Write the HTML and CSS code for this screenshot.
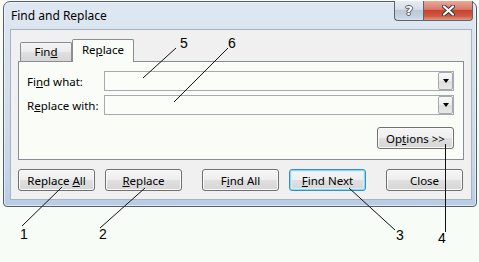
FILE: index.html
```html
<!DOCTYPE html>
<html>
<head>
<meta charset="utf-8">
<title>Find and Replace</title>
<link rel="stylesheet" href="styles.css">
</head>
<body>
<div class="window">
  <div class="titlebar">
    <span class="title">Find and Replace</span>
    <div class="caption">
      <div class="cbtn help"><span class="qmark">?</span></div>
      <div class="cbtn close">
        <svg width="13" height="11" viewBox="0 0 13 11">
          <path d="M2 1.5 L11 9.5 M11 1.5 L2 9.5" stroke="#3b3b3b" stroke-width="4.2" stroke-linecap="round"/>
          <path d="M2 1.5 L11 9.5 M11 1.5 L2 9.5" stroke="#ffffff" stroke-width="2.2" stroke-linecap="round"/>
        </svg>
      </div>
    </div>
  </div>
  <div class="client">
    <div class="tabs">
      <div class="tab">Fin<u>d</u></div>
      <div class="tab active">Re<u>p</u>lace</div>
    </div>
    <div class="panel">
      <div class="row">
        <span class="label">Fi<u>n</u>d what:</span>
        <div class="combo"><div class="drop"></div></div>
      </div>
      <div class="row">
        <span class="label">R<u>e</u>place with:</span>
        <div class="combo"><div class="drop"></div></div>
      </div>
      <div class="opts">
        <div class="btn"><span>Op<u>t</u>ions &gt;&gt;</span></div>
      </div>
    </div>
    <div class="actions">
      <div class="btn"><span>Replace <u>A</u>ll</span></div>
      <div class="btn near"><span><u>R</u>eplace</span></div>
      <div class="btn far"><span>F<u>i</u>nd All</span></div>
      <div class="btn near default"><span><u>F</u>ind Next</span></div>
      <div class="btn far"><span>Close</span></div>
    </div>
  </div>
</div>

<svg class="annot" width="479" height="262" viewBox="0 0 479 262">
  <g stroke="#111" stroke-width="1" fill="none">
    <line x1="22" y1="226" x2="62" y2="187"/>
    <line x1="100" y1="228" x2="145" y2="188"/>
    <line x1="349" y1="188" x2="395" y2="230"/>
    <line x1="445.5" y1="144" x2="445.5" y2="232"/>
    <line x1="143" y1="78" x2="176" y2="48"/>
    <line x1="174" y1="102" x2="228" y2="48"/>
  </g>
</svg>
<span class="num n1">1</span>
<span class="num n2">2</span>
<span class="num n3">3</span>
<span class="num n4">4</span>
<span class="num n5">5</span>
<span class="num n6">6</span>
</body>
</html>
```
FILE: styles.css
```css
* { box-sizing: border-box; }

body {
  margin: 0;
  padding: 1px 0 0 3px;
  width: 479px;
  height: 262px;
  position: relative;
  overflow: hidden;
  background: #f8fcf6;
  font-family: "Noto Sans", "Open Sans", sans-serif;
  font-size: 11.5px;
  color: #000;
}

u { text-underline-offset: 1px; }

.window {
  width: 474px;
  border: 1px solid #565c64;
  border-radius: 7px 7px 4px 4px;
  background: linear-gradient(#dfe8f2, #d3dfec 40%, #c6d6e8 80%, #b7cce4);
  box-shadow: inset 0 0 0 1px rgba(255, 255, 255, 0.55);
  display: flex;
  flex-direction: column;
}

.titlebar {
  height: 27px;
  display: flex;
  align-items: flex-start;
  padding: 0 3px 0 7px;
}

.title {
  flex: 1;
  line-height: 28px;
  font-size: 12px;
}

.caption {
  display: flex;
  margin-top: -1px;
}

.cbtn {
  height: 20px;
  border: 1px solid #5b6471;
  border-top: none;
  display: flex;
  align-items: center;
  justify-content: center;
}

.help {
  width: 29px;
  border-right: none;
  border-radius: 0 0 0 4px;
  background: linear-gradient(#e6ecf3, #d4dde7 45%, #bcc8d6 50%, #c8d3df 85%, #d8e1ea);
}

.qmark {
  color: #fff;
  font-family: "DejaVu Sans", sans-serif;
  font-weight: bold;
  font-size: 13px;
  line-height: 1;
  text-shadow: 0 0 1px #3d4652, 1px 0 0 #59626e, -1px 0 0 #59626e, 0 1px 0 #59626e, 0 -1px 0 #59626e;
}

.close {
  width: 50px;
  border-radius: 0 0 4px 0;
  background: linear-gradient(#eaa99b, #d97867 45%, #c5432f 50%, #cf5a45 80%, #e39983);
}

.client {
  margin: 0 4px 6px 6px;
  border: 1px solid #a7b3c0;
  background: #f0f0f0;
  padding: 9px 7px 8px;
}

.tabs {
  display: flex;
  align-items: flex-end;
  height: 22px;
  padding-left: 2px;
}

.tab {
  width: 52px;
  height: 19px;
  border: 1px solid #898c95;
  border-bottom: none;
  border-radius: 2px 2px 0 0;
  background: linear-gradient(#f4f4f4, #ececec 50%, #e0e0e0 50%, #d6d6d6);
  text-align: center;
  line-height: 17px;
}

.tab.active {
  width: 62px;
  height: 23px;
  margin-bottom: -1px;
  position: relative;
  z-index: 1;
  background: #f9fcf7;
  line-height: 20px;
}

.panel {
  border: 1px solid #898c95;
  background: #f9fcf7;
  padding: 9px 9px 10px 8px;
  display: flex;
  flex-direction: column;
  gap: 4px;
}

.row {
  display: flex;
  align-items: center;
  height: 20px;
}

.label {
  width: 77px;
}

.combo {
  flex: 1;
  height: 20px;
  border: 1px solid #a6aaaf;
  background: #fbfdf9;
  display: flex;
  justify-content: flex-end;
}

.drop {
  width: 15px;
  height: 18px;
  border: 1px solid #a3a8ae;
  border-radius: 2px;
  background: linear-gradient(#f8f8f8, #ececec 50%, #dedede 50%, #e8e8e8);
  display: flex;
  align-items: center;
  justify-content: center;
}

.drop::after {
  content: "";
  border-left: 3.5px solid transparent;
  border-right: 3.5px solid transparent;
  border-top: 4px solid #000;
}

.opts {
  display: flex;
  justify-content: flex-end;
  margin-top: 8px;
}

.btn {
  width: 77px;
  height: 22px;
  border: 1px solid #707070;
  border-radius: 3px;
  background: linear-gradient(#f5f5f5, #eeeeee 50%, #e0e0e0 50%, #d6d6d6);
  box-shadow: inset 0 0 0 1px #fbfbfb;
  display: flex;
  align-items: center;
  justify-content: center;
  white-space: nowrap;
}

.btn.default {
  border-color: #3c8ec0;
  box-shadow: inset 0 0 0 1px #8fd6f6, inset 0 0 0 2px #d2effb;
}

.actions {
  display: flex;
  margin-top: 9px;
}

.actions .near { margin-left: 10px; }
.actions .far { margin-left: 20px; }

.annot {
  position: absolute;
  left: 0;
  top: 0;
  pointer-events: none;
}

.num {
  position: absolute;
  font-family: "Liberation Sans", Arial, sans-serif;
  font-size: 14px;
  line-height: 1;
  color: #000;
}

.n1 { left: 20px; top: 227px; }
.n2 { left: 99px; top: 227px; }
.n3 { left: 396px; top: 228px; }
.n4 { left: 438px; top: 231px; }
.n5 { left: 180px; top: 36px; }
.n6 { left: 228px; top: 36px; }
```
